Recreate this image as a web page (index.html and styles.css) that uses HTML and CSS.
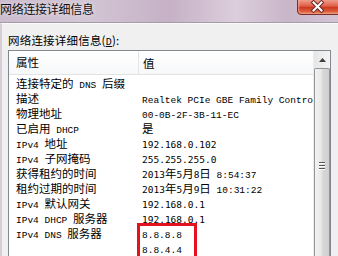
FILE: index.html
```html
<!DOCTYPE html>
<html lang="zh-CN">
<head>
<meta charset="utf-8">
<title>网络连接详细信息</title>
<link rel="stylesheet" href="styles.css">
</head>
<body>
<div class="win">
  <div class="titlebar">
    <span class="title">网络连接详细信息</span>
    <div class="close">
      <svg width="41" height="15" viewBox="0 0 41 15">
        <defs>
          <linearGradient id="cg" x1="0" y1="0" x2="0" y2="1">
            <stop offset="0" stop-color="#f0a898"/>
            <stop offset="0.45" stop-color="#e06048"/>
            <stop offset="0.55" stop-color="#cc3a22"/>
            <stop offset="1" stop-color="#e8784e"/>
          </linearGradient>
        </defs>
        <path d="M0.5 -1 V11 Q0.5 14.5 4 14.5 H42 V-1 Z" fill="url(#cg)" stroke="#7a3028" stroke-width="1"/>
        <path d="M1.8 -1 V10.8 Q1.8 13.2 4.3 13.2 H42" fill="none" stroke="#f6c4b4" stroke-width="0.8" opacity="0.8"/>
        <path d="M16.5 2.5 L24.5 10.5 M24.5 2.5 L16.5 10.5" stroke="#6a2a26" stroke-width="4" stroke-linecap="square"/>
        <path d="M16.5 2.5 L24.5 10.5 M24.5 2.5 L16.5 10.5" stroke="#ffffff" stroke-width="2" stroke-linecap="square"/>
      </svg>
    </div>
  </div>
  <div class="body">
    <div class="label">网络连接详细信息(<span class="u">D</span>):</div>
    <div class="listbox">
      <div class="list">
        <div class="header">
          <div class="c1">属性</div>
          <div class="c2">值</div>
        </div>
        <div class="row"><div class="c1">连接特定的<span class="m"> DNS </span>后缀</div><div class="c2"></div></div>
        <div class="row"><div class="c1">描述</div><div class="c2"><span class="m">Realtek PCIe GBE Family Controller</span></div></div>
        <div class="row"><div class="c1">物理地址</div><div class="c2"><span class="m">00-0B-2F-3B-11-EC</span></div></div>
        <div class="row"><div class="c1">已启用<span class="m"> DHCP</span></div><div class="c2">是</div></div>
        <div class="row"><div class="c1"><span class="m">IPv4 </span>地址</div><div class="c2"><span class="d">192.168.0.102</span></div></div>
        <div class="row"><div class="c1"><span class="m">IPv4 </span>子网掩码</div><div class="c2"><span class="d">255.255.255.0</span></div></div>
        <div class="row"><div class="c1">获得租约的时间</div><div class="c2"><span class="d">2013</span>年<span class="d">5</span>月<span class="d">8</span>日<span class="m"> 8:54:37</span></div></div>
        <div class="row"><div class="c1">租约过期的时间</div><div class="c2"><span class="d">2013</span>年<span class="d">5</span>月<span class="d">9</span>日<span class="m"> 10:31:22</span></div></div>
        <div class="row"><div class="c1"><span class="m">IPv4 </span>默认网关</div><div class="c2"><span class="d">192.168.0.1</span></div></div>
        <div class="row"><div class="c1"><span class="m">IPv4 DHCP </span>服务器</div><div class="c2"><span class="d">192.168.0.1</span></div></div>
        <div class="row"><div class="c1"><span class="m">IPv4 DNS </span>服务器</div><div class="c2"><span class="m">8.8.8.8</span></div></div>
        <div class="row"><div class="c1"></div><div class="c2"><span class="m">8.8.4.4</span></div></div>
        <div class="redbox"></div>
      </div>
      <div class="scrollbar">
        <div class="sbtn">
          <svg width="7" height="4" viewBox="0 0 7 4"><path d="M0 4 L3.5 0 L7 4 Z" fill="#404040"/></svg>
        </div>
        <div class="thumb">
          <div class="grip"><i></i><i></i><i></i></div>
        </div>
      </div>
    </div>
  </div>
</div>
</body>
</html>
```
FILE: styles.css
```css
html, body {
  margin: 0;
  padding: 0;
  width: 338px;
  height: 256px;
  overflow: hidden;
  background: #f0f0f0;
}
.win {
  width: 338px;
  height: 256px;
  display: flex;
  flex-direction: column;
  font-family: "Noto Sans CJK SC", sans-serif;
  color: #000;
}
.titlebar {
  height: 22px;
  flex: none;
  display: flex;
  justify-content: space-between;
  align-items: flex-start;
  background: linear-gradient(90deg, #cbbccd 0%, #d3c6d5 25%, #c6b1c6 50%, #dccedc 70%, #c9b6c9 85%, #d2c3d3 100%);
  border-bottom: 1px solid #a59ba8;
}
.title {
  font-size: 12px;
  line-height: 16px;
  padding-top: 1px;
  letter-spacing: -0.3px;
  color: #111;
  text-shadow: 0 0 4px rgba(255,255,255,0.8);
}
.close {
  width: 41px;
  height: 15px;
  flex: none;
}
.close svg { display: block; }
.body {
  flex: 1;
  display: flex;
  flex-direction: column;
  padding: 9px 7px 0 8px;
  border-left: 2px solid #d6ccd6;
  border-top: 1px solid #fafafa;
  min-height: 0;
}
.label {
  font-size: 11.5px;
  line-height: 15px;
  height: 17px;
  margin-left: -2px;
  letter-spacing: 0.2px;
}
.u { text-decoration: underline; font-family: "Liberation Mono", monospace; font-size: 10px; }
.listbox {
  flex: 1;
  display: flex;
  border: 1px solid #828790;
  border-bottom: none;
  background: #fff;
  margin-left: -2px;
  min-height: 0;
}
.list {
  flex: 1;
  position: relative;
  font-size: 11.5px;
  min-width: 0;
  overflow: hidden;
}
.header {
  display: flex;
  height: 23px;
  border-bottom: 1px solid #e3e3e3;
  background: linear-gradient(#ffffff, #f7f8fa);
  align-items: center;
  margin-bottom: 1px;
}
.header .c1 {
  border-right: 1px solid #e3e5e8;
  height: 23px;
  line-height: 23px;
}
.c1 {
  width: 122px;
  flex: none;
  padding-left: 7px;
  white-space: nowrap;
}
.c2 {
  padding-left: 4px;
  white-space: nowrap;
}
.row {
  display: flex;
  height: 15px;
  line-height: 15px;
}
.m {
  font-family: "Liberation Mono", monospace;
  font-size: 9.5px;
}
.d {
  font-family: "DejaVu Sans Mono", monospace;
  font-size: 9.5px;
}
.redbox {
  position: absolute;
  left: 128px;
  top: 172px;
  width: 54px;
  height: 40px;
  border: 3px solid #e3121e;
}
.scrollbar {
  width: 16px;
  flex: none;
  display: flex;
  flex-direction: column;
  background: linear-gradient(90deg, #e6e6e6, #f4f4f4);
  border-left: 1px solid #ececec;
}
.sbtn {
  height: 17px;
  flex: none;
  display: flex;
  align-items: center;
  justify-content: center;
}
.thumb {
  flex: 1;
  border: 1px solid #959595;
  border-bottom: none;
  border-radius: 2px 2px 0 0;
  background: linear-gradient(90deg, #f2f2f2 0%, #e8e8e8 45%, #d8d8d8 55%, #cfcfcf 100%);
  display: flex;
  flex-direction: column;
  align-items: center;
  padding-top: 93px;
}
.grip {
  display: flex;
  flex-direction: column;
  gap: 2px;
}
.grip i {
  display: block;
  width: 6px;
  height: 1px;
  background: #555;
  box-shadow: 0 1px 0 #fff;
}
```
